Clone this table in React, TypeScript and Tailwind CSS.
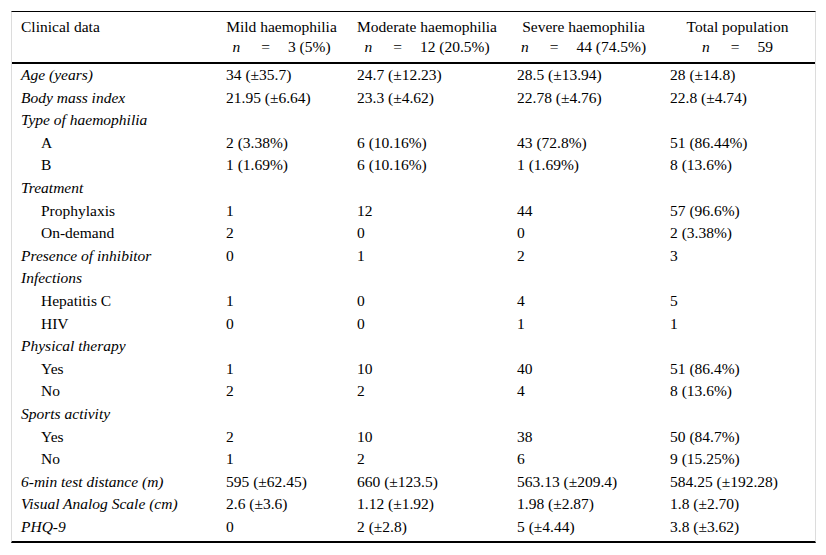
import React from "react";

type Row = { label: string; kind: "main" | "section" | "sub"; vals?: string[] };

const rows: Row[] = [
  { label: "Age (years)", kind: "main", vals: ["34 (±35.7)", "24.7 (±12.23)", "28.5 (±13.94)", "28 (±14.8)"] },
  { label: "Body mass index", kind: "main", vals: ["21.95 (±6.64)", "23.3 (±4.62)", "22.78 (±4.76)", "22.8 (±4.74)"] },
  { label: "Type of haemophilia", kind: "section" },
  { label: "A", kind: "sub", vals: ["2 (3.38%)", "6 (10.16%)", "43 (72.8%)", "51 (86.44%)"] },
  { label: "B", kind: "sub", vals: ["1 (1.69%)", "6 (10.16%)", "1 (1.69%)", "8 (13.6%)"] },
  { label: "Treatment", kind: "section" },
  { label: "Prophylaxis", kind: "sub", vals: ["1", "12", "44", "57 (96.6%)"] },
  { label: "On-demand", kind: "sub", vals: ["2", "0", "0", "2 (3.38%)"] },
  { label: "Presence of inhibitor", kind: "main", vals: ["0", "1", "2", "3"] },
  { label: "Infections", kind: "section" },
  { label: "Hepatitis C", kind: "sub", vals: ["1", "0", "4", "5"] },
  { label: "HIV", kind: "sub", vals: ["0", "0", "1", "1"] },
  { label: "Physical therapy", kind: "section" },
  { label: "Yes", kind: "sub", vals: ["1", "10", "40", "51 (86.4%)"] },
  { label: "No", kind: "sub", vals: ["2", "2", "4", "8 (13.6%)"] },
  { label: "Sports activity", kind: "section" },
  { label: "Yes", kind: "sub", vals: ["2", "10", "38", "50 (84.7%)"] },
  { label: "No", kind: "sub", vals: ["1", "2", "6", "9 (15.25%)"] },
  { label: "6-min test distance (m)", kind: "main", vals: ["595 (±62.45)", "660 (±123.5)", "563.13 (±209.4)", "584.25 (±192.28)"] },
  { label: "Visual Analog Scale (cm)", kind: "main", vals: ["2.6 (±3.6)", "1.12 (±1.92)", "1.98 (±2.87)", "1.8 (±2.70)"] },
  { label: "PHQ-9", kind: "main", vals: ["0", "2 (±2.8)", "5 (±4.44)", "3.8 (±3.62)"] },
];

const heads = [
  { t: "Mild haemophilia", n: "3 (5%)" },
  { t: "Moderate haemophilia", n: "12 (20.5%)" },
  { t: "Severe haemophilia", n: "44 (74.5%)" },
  { t: "Total population", n: "59" },
];

function NLine({ n }: { n: string }) {
  return (
    <span className="inline-flex items-baseline">
      <span className="italic">n</span>
      <span className="ml-[21px] mr-[18px]">=</span>
      <span>{n}</span>
    </span>
  );
}

export default function App() {
  return (
    <div className="bg-white w-[826px] h-[555px] pt-[11px] pl-[11px] text-[15.5px] text-black" style={{ fontFamily: '"Liberation Serif", "Times New Roman", serif' }}>
      <div className="w-[805px] border-t border-t-black border-l border-l-[#dcdcdc] border-r border-r-[#dcdcdc] border-b-2 border-b-black pb-[3px]">
        <table className="w-full border-collapse table-fixed">
          <colgroup>
            <col className="w-[204px]" />
            <col className="w-[131px]" />
            <col className="w-[160px]" />
            <col className="w-[153px]" />
            <col className="w-[155px]" />
          </colgroup>
          <thead>
            <tr className="border-b-2 border-b-black">
              <th className="font-normal text-left align-top pl-[9px] pt-[5px] pb-[5px] leading-[20px]">Clinical data</th>
              {heads.map((h, i) => (
                <th key={i} className="font-normal text-center align-top px-[8px] pt-[5px] pb-[5px] leading-[20px] whitespace-nowrap">
                  <div>{h.t}</div>
                  <div><NLine n={h.n} /></div>
                </th>
              ))}
            </tr>
          </thead>
          <tbody>
            {rows.map((r, i) => (
              <tr key={i} className="h-[22.6px]">
                <td className={`leading-[22.6px] p-0 whitespace-nowrap ${r.kind === "sub" ? "pl-[29px]" : "pl-[9px]"} ${r.kind === "sub" ? "" : "italic"}`}>{r.label}</td>
                {[0, 1, 2, 3].map((j) => (
                  <td key={j} className="leading-[22.6px] p-0 pl-[10px] whitespace-nowrap">{r.vals ? r.vals[j] : ""}</td>
                ))}
              </tr>
            ))}
          </tbody>
        </table>
      </div>
    </div>
  );
}
